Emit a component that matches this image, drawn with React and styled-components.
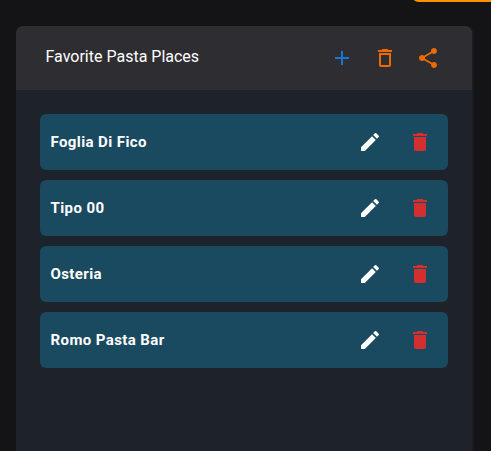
import React from "react";
import styled, { createGlobalStyle } from "styled-components";

const GlobalStyle = createGlobalStyle`
  * { box-sizing: border-box; }
  body {
    margin: 0;
    background: #141416;
    font-family: Roboto, "Noto Sans", sans-serif;
    color: #fff;
    overflow: hidden;
  }
`;

const Page = styled.main`
  position: relative;
  height: 451px;
  padding: 26px 17px 0 16px;
  overflow: hidden;
`;

const FloatingButton = styled.div`
  position: absolute;
  top: -34px;
  left: 411px;
  width: 120px;
  height: 36px;
  border-radius: 8px;
  background: #ff9100;
`;

const Panel = styled.section`
  width: 458px;
  height: 500px;
  padding-right: 2px;
  border-radius: 8px;
  background: #1c1c20;
`;

const PanelSurface = styled.div`
  height: 100%;
  border-radius: 7px 7px 0 0;
  background: #1e222a;
  overflow: hidden;
`;

const Header = styled.header`
  display: flex;
  align-items: center;
  justify-content: space-between;
  height: 64px;
  padding: 0 32px 0 29.5px;
  background: #2e2d32;
`;

const Title = styled.h1`
  margin: 0 0 3px;
  font-size: 16px;
  line-height: 24px;
  font-weight: 400;
  white-space: nowrap;
`;

const Actions = styled.div`
  display: flex;
  gap: ${({ $gap }) => $gap}px;
`;

const IconButton = styled.button`
  display: flex;
  padding: 0;
  border: 0;
  background: none;
  color: ${({ $color }) => $color};
`;

const Icon = styled.svg`
  display: block;
  width: 24px;
  height: 24px;
  fill: currentColor;
`;

const List = styled.ul`
  display: flex;
  flex-direction: column;
  gap: 10px;
  margin: 0;
  padding: 24px;
  list-style: none;
`;

const Item = styled.li`
  display: flex;
  align-items: center;
  justify-content: space-between;
  height: 56px;
  padding: 0 16px 0 10.5px;
  border-radius: 6px;
  background: #1a4a60;
`;

const ItemName = styled.span`
  font-size: 15px;
  line-height: 22px;
  font-weight: 700;
  letter-spacing: 0.4px;
  white-space: nowrap;
`;

const paths = {
  add: "M19 13h-6v6h-2v-6H5v-2h6V5h2v6h6v2z",
  clear:
    "M6 19c0 1.1.9 2 2 2h8c1.1 0 2-.9 2-2V7H6v12zM8 9h8v10H8V9zm7.5-5l-1-1h-5l-1 1H5v2h14V4z",
  share:
    "M18 16.08c-.76 0-1.44.3-1.96.77L8.91 12.7c.05-.23.09-.46.09-.7s-.04-.47-.09-.7l7.05-4.11c.54.5 1.25.81 2.04.81 1.66 0 3-1.34 3-3s-1.34-3-3-3-3 1.34-3 3c0 .24.04.47.09.7L8.04 9.81C7.5 9.31 6.79 9 6 9c-1.66 0-3 1.34-3 3s1.34 3 3 3c.79 0 1.5-.31 2.04-.81l7.12 4.16c-.05.21-.08.43-.08.65 0 1.61 1.31 2.92 2.92 2.92s2.92-1.31 2.92-2.92-1.31-2.92-2.92-2.92z",
  edit:
    "M3 17.25V21h3.75L17.81 9.94l-3.75-3.75L3 17.25zM20.71 7.04c.39-.39.39-1.02 0-1.41l-2.34-2.34a.9959.9959 0 0 0-1.41 0l-1.83 1.83 3.75 3.75 1.83-1.83z",
  remove: "M6 19c0 1.1.9 2 2 2h8c1.1 0 2-.9 2-2V7H6v12zM19 4h-3.5l-1-1h-5l-1 1H5v2h14V4z",
};

function Action({ icon, color, label }) {
  return (
    <IconButton type="button" $color={color} aria-label={label}>
      <Icon viewBox="0 0 24 24" aria-hidden="true">
        <path d={paths[icon]} />
      </Icon>
    </IconButton>
  );
}

const places = ["Foglia Di Fico", "Tipo 00", "Osteria", "Romo Pasta Bar"];

export default function App() {
  return (
    <Page>
      <GlobalStyle />
      <FloatingButton />
      <Panel>
        <PanelSurface>
          <Header>
            <Title>Favorite Pasta Places</Title>
            <Actions $gap={19}>
              <Action icon="add" color="#1976d2" label="Add place" />
              <Action icon="clear" color="#ed6c02" label="Delete list" />
              <Action icon="share" color="#ed6c02" label="Share list" />
            </Actions>
          </Header>
          <List>
            {places.map((name) => (
              <Item key={name}>
                <ItemName>{name}</ItemName>
                <Actions $gap={26}>
                  <Action icon="edit" color="#fff" label={`Edit ${name}`} />
                  <Action icon="remove" color="#d32f2f" label={`Delete ${name}`} />
                </Actions>
              </Item>
            ))}
          </List>
        </PanelSurface>
      </Panel>
    </Page>
  );
}
